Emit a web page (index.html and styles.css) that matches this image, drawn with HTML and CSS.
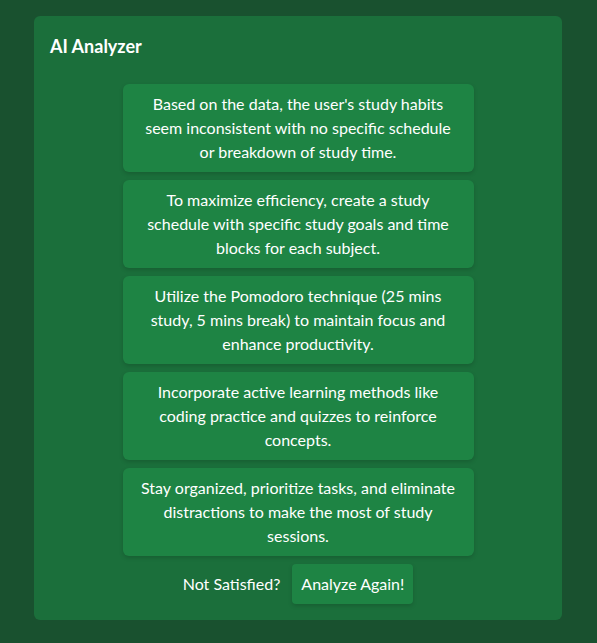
FILE: index.html
```html
<!DOCTYPE html>
<html>
<head>
<meta charset="utf-8">
<link rel="stylesheet" href="styles.css">
</head>
<body>
<div class="card">
  <h2 class="title">AI Analyzer</h2>
  <div class="list">
    <div class="item">Based on the data, the user's study habits seem inconsistent with no specific schedule or breakdown of study time.</div>
    <div class="item">To maximize efficiency, create a study schedule with specific study goals and time blocks for each subject.</div>
    <div class="item">Utilize the Pomodoro technique (25 mins study, 5 mins break) to maintain focus and enhance productivity.</div>
    <div class="item">Incorporate active learning methods like coding practice and quizzes to reinforce concepts.</div>
    <div class="item">Stay organized, prioritize tasks, and eliminate distractions to make the most of study sessions.</div>
  </div>
  <div class="footer">
    <span class="label">Not Satisfied?</span>
    <button class="btn">Analyze Again!</button>
  </div>
</div>
</body>
</html>
```
FILE: styles.css
```css
html, body {
  margin: 0;
  padding: 0;
  background: #19512f;
  font-family: "Lato", "Noto Sans", sans-serif;
  color: #fff;
}
body {
  padding: 16px 35px 24px 34px;
}
.card {
  background: #1b6f3b;
  border-radius: 6px;
  padding: 16px 16px 16px;
}
.title {
  margin: 0;
  font-size: 18px;
  font-weight: 700;
  line-height: 28px;
}
.list {
  display: flex;
  flex-direction: column;
  align-items: center;
  gap: 8px;
  margin-top: 24px;
}
.item {
  width: 319px;
  padding: 8px 16px;
  background: #1e8444;
  border-radius: 6px;
  text-align: center;
  font-size: 16px;
  line-height: 24px;
  box-shadow: 0 2px 4px rgba(0,0,0,0.15);
}
.footer {
  display: flex;
  justify-content: center;
  align-items: center;
  gap: 12px;
  margin-top: 8px;
}
.label {
  font-size: 16px;
  line-height: 24px;
}
.btn {
  font-family: inherit;
  font-size: 16px;
  line-height: 24px;
  color: #fff;
  background: #1e8444;
  border: none;
  border-radius: 4px;
  padding: 8px 9px;
  box-shadow: 0 2px 4px rgba(0,0,0,0.15);
}
```
